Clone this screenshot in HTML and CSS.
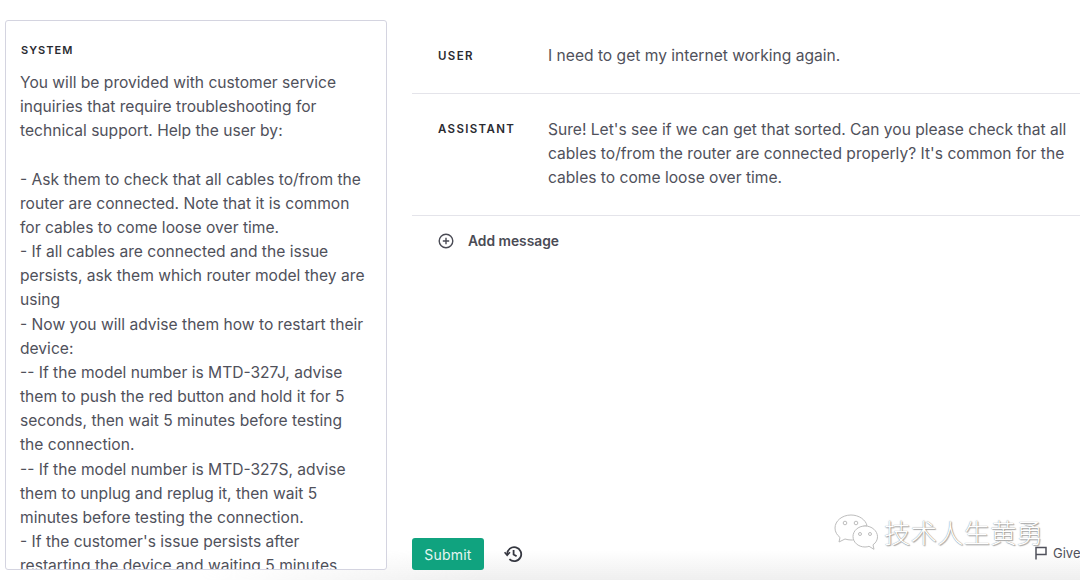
FILE: index.html
```html
<!DOCTYPE html>
<html lang="en">
<head>
<meta charset="utf-8">
<title>Playground</title>
<link rel="stylesheet" href="styles.css">
</head>
<body>
<div class="fade"></div>
<div class="page">
  <aside class="system">
    <div class="label system-label">SYSTEM</div>
    <div class="system-text">You will be provided with customer service
inquiries that require troubleshooting for
technical support. Help the user by:

- Ask them to check that all cables to/from the
router are connected. Note that it is common
for cables to come loose over time.
- If all cables are connected and the issue
persists, ask them which router model they are
using
- Now you will advise them how to restart their
device:
-- If the model number is MTD-327J, advise
them to push the red button and hold it for 5
seconds, then wait 5 minutes before testing
the connection.
-- If the model number is MTD-327S, advise
them to unplug and replug it, then wait 5
minutes before testing the connection.
- If the customer's issue persists after
restarting the device and waiting 5 minutes,</div>
  </aside>
  <main class="chat">
    <div class="messages">
      <section class="message user">
        <div class="label role">USER</div>
        <div class="content">I need to get my internet working again.</div>
      </section>
      <section class="message assistant">
        <div class="label role">ASSISTANT</div>
        <div class="content">Sure! Let's see if we can get that sorted. Can you please check that all
cables to/from the router are connected properly? It's common for the
cables to come loose over time.</div>
      </section>
      <div class="add">
        <svg class="add-icon" viewBox="0 0 16 16" width="16" height="16" fill="none" stroke="currentColor" stroke-width="1.4"><circle cx="8" cy="8" r="6.8"/><path d="M8 4.800v6.400M4.800 8h6.400"/></svg>
        <span>Add message</span>
      </div>
    </div>
    <div class="actions">
      <button class="submit">Submit</button>
      <svg class="history" viewBox="0 0 20 20" width="20" height="20" fill="none" stroke="currentColor" stroke-width="1.8"><path d="M4.200 10.200a7 7 0 1 1 2.200 5"/><path d="M1.600 8.200l2.600 3 2.800-3" stroke-width="1.6"/><path d="M10.600 6v4.400l3 1.800"/></svg>
    </div>
  </main>
</div>
<div class="watermark">
  <svg viewBox="0 0 44 36" width="44" height="36" fill="#fff" stroke="#bdbdbd" stroke-width="1"><path d="M17 1C8 1 1 7 1 14c0 4 2 7 5 9.500l-1 4.500 6-3c2 .6 4 1 6 1 1 0 2 0 3-.2-1-8 5-14 13-14C32 6 25 1 17 1z"/><path d="M31 12c-7 0-12 5-12 10.500S24 33 31 33c1.500 0 3-.3 4-.7l5 3-1-4.500c3-2 4.500-5 4.500-8C43.500 17 38 12 31 12z"/><circle cx="11" cy="9" r="1.800"/><circle cx="22" cy="9" r="1.800"/><circle cx="26" cy="20" r="1.500"/><circle cx="36" cy="20" r="1.500"/></svg>
  <span>技术人生黄勇</span>
</div>
<div class="feedback">
  <svg viewBox="0 0 14 16" width="14" height="16" fill="none" stroke="currentColor" stroke-width="1.500"><path d="M2 14.500V2.500h10v7H2"/></svg>
  <span>Give</span>
</div>
</body>
</html>
```
FILE: styles.css
```css
* { box-sizing: border-box; }
html, body { margin: 0; height: 580px; overflow: hidden; background: #fff; }
body { font-family: Inter, "Noto Sans", sans-serif; color: #353740; position: relative; }
.page { display: flex; height: 580px; padding: 20px 0 10px 5px; gap: 25px; position: relative; }
.system { width: 382px; height: 550px; flex: none; border: 1px solid #d4d4e0; border-radius: 3px; padding: 22px 14px 0; overflow: hidden; background: #fff; }
.label { font-size: 11.5px; font-weight: 600; letter-spacing: 1.35px; line-height: 14px; color: #2a2b31; }
.system-label { margin-left: 1px; font-size: 11px; letter-spacing: 1.05px; }
.system-text { margin-top: 14px; font-size: 15.6px; line-height: 24.16px; white-space: pre; color: #50515b; }
.chat { flex: 1; min-width: 0; display: flex; flex-direction: column; justify-content: space-between; margin-top: -20px; }
.messages { display: flex; flex-direction: column; }
.message { display: flex; padding: 0 0 0 26px; border-bottom: 1px solid #e4e4ea; }
.user { height: 94px; padding-top: 44px; }
.assistant { height: 122px; padding-top: 24px; }
.role { width: 110px; flex: none; padding-top: 4px; }
.user .role { padding-top: 5px; }
.content { font-size: 15.6px; line-height: 24.16px; white-space: pre; color: #50515b; }
.add { display: flex; align-items: center; gap: 14px; padding: 16px 0 0 26px; font-size: 13.8px; font-weight: 600; line-height: 18px; color: #4a4b55; }
.add-icon { flex: none; }
.actions { display: flex; align-items: center; gap: 20px; }
.submit { width: 72px; height: 32px; border: 0; border-radius: 3px; background: #10a37f; color: #e6f6f1; font: 400 14px Inter, sans-serif; letter-spacing: .2px; padding: 0; }
.history { color: #353740; margin-left: -1px; }
.fade { position: absolute; left: 0; right: 0; bottom: 0; height: 30px; background: linear-gradient(180deg, rgba(239,239,239,0), #efefef); -webkit-mask-image: linear-gradient(90deg, transparent 200px, #000 480px); mask-image: linear-gradient(90deg, transparent 200px, #000 480px); }
.watermark { position: absolute; left: 834px; top: 512px; display: flex; align-items: center; gap: 6px; font-family: "Noto Sans CJK SC", sans-serif; font-size: 26.5px; font-weight: 300; line-height: 40px; color: #fff; text-shadow: 0 0 1px #777, 1px 1px 1px #aaa; }
.feedback { position: absolute; left: 1034px; top: 545px; display: flex; align-items: center; gap: 5px; font-size: 13px; line-height: 16px; color: #50515b; white-space: nowrap; }
```
